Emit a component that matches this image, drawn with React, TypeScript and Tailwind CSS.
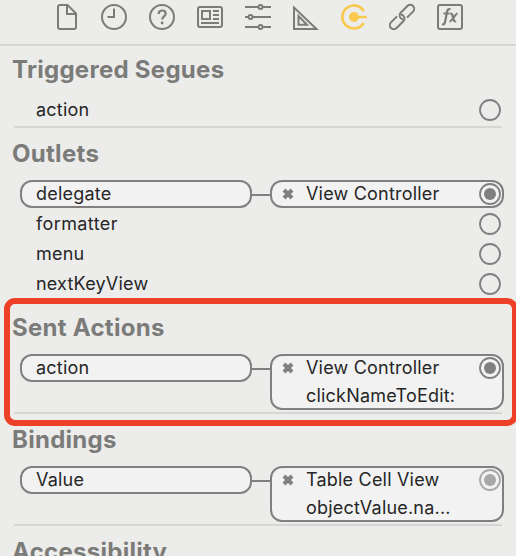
import type { ReactNode } from "react";

function Port({ filled = false, dim = false }: { filled?: boolean; dim?: boolean }) {
  return (
    <svg viewBox="0 0 22 22" className={`h-[22px] w-[22px] shrink-0 ${dim ? "text-[#a8a8a8]" : "text-[#808080]"}`}>
      <circle cx="11" cy="11" r="10" fill="none" stroke="currentColor" strokeWidth="1.8" />
      {filled && <circle cx="11" cy="11" r="6" fill="currentColor" />}
    </svg>
  );
}

function Cross() {
  return (
    <svg viewBox="0 0 12 12" className="mt-1.5 h-3 w-3 shrink-0">
      <path d="M2 2 10 10M10 2 2 10" stroke="#808080" strokeWidth="4" />
    </svg>
  );
}

function PlainRow({ name }: { name: string }) {
  return (
    <div className="flex h-7 items-center justify-between pr-[15px] pl-9">
      <span className={name === "formatter" ? "pb-0.5 tracking-[0.4px]" : "pb-0.5"}>{name}</span>
      <Port />
    </div>
  );
}

function LinkedRow({ name, lines, dim }: { name: string; lines: string[]; dim?: boolean }) {
  return (
    <div className="flex items-start pr-3 pl-5">
      <div className="flex h-7 w-[232px] items-center rounded-[12px] border-2 border-[#808080] bg-[#f2f2f2] pb-0.5 pl-3.5">
        {name}
      </div>
      <div className="mt-3.5 h-0.5 w-[18px] bg-[#808080]" />
      <div className="flex w-[234px] items-start rounded-[12px] border-2 border-[#808080] bg-[#f2f2f2] pl-2.5">
        <Cross />
        <div className="ml-3 flex-1">
          {lines.map((line, i) => (
            <div key={line} className={i === 0 ? "h-6 leading-6" : "h-7 leading-8"}>
              {line}
            </div>
          ))}
        </div>
        <div className="mt-px mr-px">
          <Port filled dim={dim} />
        </div>
      </div>
    </div>
  );
}

function Section({ title, first, children }: { title: string; first?: boolean; children?: ReactNode }) {
  return (
    <section>
      <h2
        className={`flex items-center pl-3 text-[24px] font-bold tracking-[0.28px] text-[#7b7b79] ${first ? "h-[50px] pb-0.5" : "h-[52px]"}`}
      >
        {title}
      </h2>
      <div className="flex flex-col gap-0.5">
        {children}
        <div className="mr-3.5 ml-3.5 h-0.5 bg-[#d6d6d4]" />
      </div>
    </section>
  );
}

function Icon({ children, active }: { children: ReactNode; active?: boolean }) {
  return (
    <svg
      viewBox="0 0 28 28"
      fill="none"
      stroke="currentColor"
      strokeWidth="2"
      className={`h-7 w-7 shrink-0 ${active ? "text-[#f8c94d]" : "text-[#7b7b79]"}`}
    >
      {children}
    </svg>
  );
}

function Toolbar() {
  return (
    <div className="flex h-[46px] items-start gap-5 border-b-2 border-[#d6d6d4] pt-[3px] pl-[53px]">
      <Icon>
        <path d="M7 2h7.500l8.500 8.500V24a2 2 0 0 1-2 2H7a2 2 0 0 1-2-2V4a2 2 0 0 1 2-2Z" />
        <path d="M14 2.500V11h8.500" />
      </Icon>
      <Icon>
        <circle cx="13" cy="14" r="12" />
        <path d="M13 5.500V14H6.500" />
      </Icon>
      <Icon>
        <circle cx="13" cy="14" r="12" />
        <path d="M9.700 11c0-2.200 1.400-3.500 3.500-3.500s3.500 1.300 3.500 3.200c0 2.700-3.500 2.800-3.500 5.800" strokeWidth="2.200" />
        <circle cx="13.100" cy="20" r="1.400" fill="currentColor" stroke="none" />
      </Icon>
      <Icon>
        <rect x="1" y="4" width="24" height="20" rx="2" />
        <rect x="5" y="8" width="8" height="8" />
        <path d="M16 8h6M16 12h6M16 16h6M4 20h18" />
      </Icon>
      <Icon>
        <path d="M0 4h13M18 4h8M0 14h3M8 14h18M0 24h13M18 24h8" />
        <circle cx="15.500" cy="4" r="2" />
        <circle cx="5.500" cy="14" r="2" />
        <circle cx="15.500" cy="24" r="2" />
      </Icon>
      <Icon>
        <path d="M1 4.500V26h22.500Z" />
        <path d="M5.500 13v8.800h8.500Z" />
      </Icon>
      <Icon active>
        <path d="M22.700 8A11.500 11.500 0 1 0 22.700 20" strokeWidth="2.700" />
        <circle cx="13" cy="14" r="5" fill="currentColor" stroke="none" />
        <path d="M14 14h12" strokeWidth="2.400" />
      </Icon>
      <Icon>
        <path d="M14 16.400A3.950 3.950 0 0 1 11.700 9.700L18.400 3A3.950 3.950 0 0 1 24 8.600L18 14.600" />
        <path d="M12 11.600A3.950 3.950 0 0 1 14.300 18.300L7.600 25A3.950 3.950 0 0 1 2 19.400L8 13.400" />
      </Icon>
      <Icon>
        <rect x="1" y="2" width="24" height="24" rx="2" />
        <path
          d="M5 21.300c2 .5 2.700-.5 3.200-3L10 9c.5-2.500 1.500-3.300 3.500-2.800M6.500 10.500h6M13.200 10.500c2 0 2 .5 2.800 4s1 4 3.200 4M20.500 10.500c-2 0-5.500 8-8 8"
          strokeWidth="2.200"
        />
      </Icon>
    </div>
  );
}

export default function App() {
  return (
    <div className="relative h-[556px] w-[516px] overflow-hidden bg-[#ececeb] font-['Inter','Liberation_Sans',sans-serif] text-[18px] tracking-[0.2px] text-[#262626]">
      <Toolbar />
      <Section title="Triggered Segues" first>
        <PlainRow name="action" />
      </Section>
      <Section title="Outlets">
        <LinkedRow name="delegate" lines={["View Controller"]} />
        <PlainRow name="formatter" />
        <PlainRow name="menu" />
        <PlainRow name="nextKeyView" />
      </Section>
      <Section title="Sent Actions">
        <LinkedRow name="action" lines={["View Controller", "clickNameToEdit:"]} />
      </Section>
      <Section title="Bindings">
        <LinkedRow name="Value" lines={["Table Cell View", "objectValue.na..."]} dim />
      </Section>
      <Section title="Accessibility" />
      <div className="absolute top-[298px] left-1 h-32 w-[514px] rounded-[11px] border-[6px] border-[#ee4027]" />
    </div>
  );
}
